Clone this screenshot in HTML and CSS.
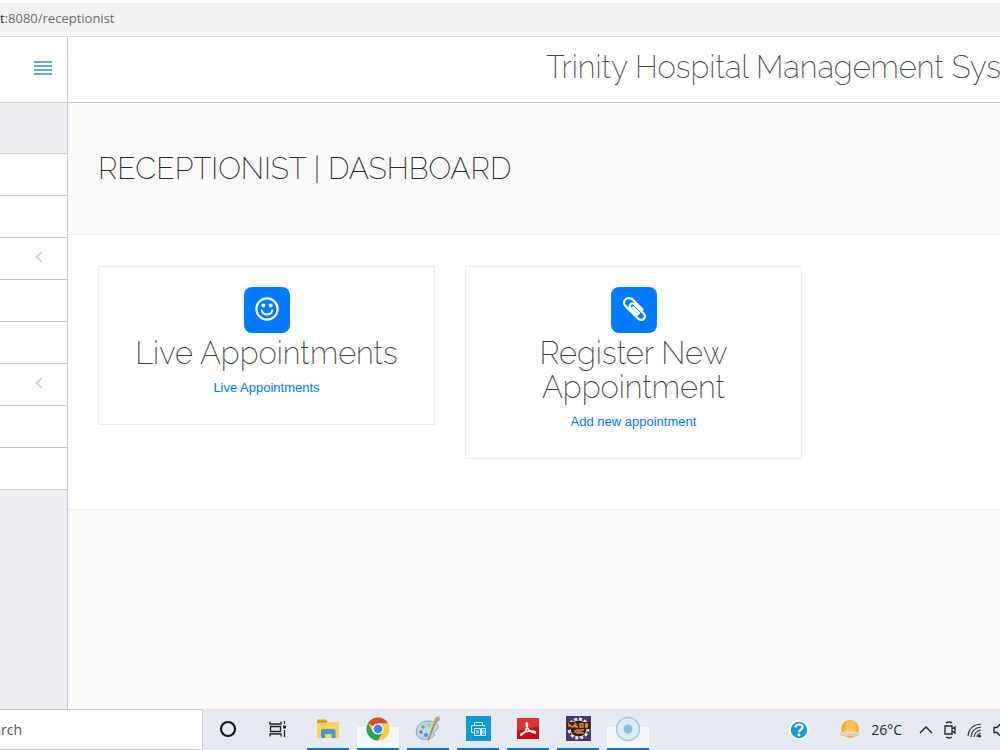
FILE: index.html
```html
<!DOCTYPE html>
<html lang="en">
<head>
<meta charset="utf-8">
<meta name="viewport" content="width=device-width, initial-scale=1.0">
<title>Receptionist | Dashboard</title>
<link rel="stylesheet" href="styles.css">
</head>
<body>

<!-- Address bar -->
<div class="address-bar">
  <div class="url"><b>t</b>:8080/receptionist</div>
</div>

<div class="app">
  <!-- Sidebar -->
  <aside class="sidebar">
    <div class="sidebar-head">
      <button class="menu-toggle" aria-label="Toggle menu"><span></span><span></span><span></span><span></span></button>
    </div>
    <nav class="menu">
      <a href="#"></a>
      <a href="#"></a>
      <a href="#"><svg width="8" height="12" viewBox="0 0 8 12"><path d="M7 1L1.500 6L7 11"/></svg></a>
      <a href="#"></a>
      <a href="#"></a>
      <a href="#"><svg width="8" height="12" viewBox="0 0 8 12"><path d="M7 1L1.500 6L7 11"/></svg></a>
      <a href="#"></a>
      <a href="#"></a>
    </nav>
  </aside>

  <div class="content">
    <header class="navbar">
      <h2>Trinity Hospital Management System</h2>
    </header>
    <section class="page-title">
      <h1>RECEPTIONIST | DASHBOARD</h1>
    </section>
    <main class="cards">
      <div class="card">
        <span class="card-icon">
          <svg width="24" height="24" viewBox="0 0 24 24">
            <circle cx="12" cy="12" r="10.600" fill="none" stroke="#fff" stroke-width="2.200"/>
            <circle cx="8.300" cy="8.500" r="2" fill="#fff"/>
            <circle cx="15.700" cy="8.500" r="2" fill="#fff"/>
            <path d="M6.800 13.500C8 18.800 16 18.800 17.200 13.500" fill="none" stroke="#fff" stroke-width="2" stroke-linecap="round"/>
          </svg>
        </span>
        <h2>Live Appointments</h2>
        <a href="#">Live Appointments</a>
      </div>
      <div class="card">
        <span class="card-icon">
          <svg width="24" height="24" viewBox="0 0 24 24" fill="none" stroke="#fff" stroke-width="2.200" stroke-linecap="round" stroke-linejoin="round">
            <path d="M20.500 12.500L11.500 3.200C8.500 0.200 4.200 0.600 2.600 3.400C1.500 5.500 2 7.600 3.800 9.400L15.800 21.200C18 23.400 20.600 23.400 22 21.800C23.400 20.200 23 17.800 21.400 16.200L12.800 7.600C11.200 6 9.400 6.200 8.400 7.200C7.400 8.400 7.600 10 8.800 11.200L15.500 17.800"/>
            <path d="M11.200 10.200L17.200 16.200"/>
          </svg>
        </span>
        <h2>Register New Appointment</h2>
        <a href="#">Add new appointment</a>
      </div>
    </main>
  </div>
</div>

<!-- Taskbar -->
<footer class="taskbar">
  <div class="search"><span>arch</span></div>
  <div class="apps">
    <button class="task" aria-label="Cortana">
      <svg width="18" height="18" viewBox="0 0 18 18"><circle cx="9" cy="9" r="7" fill="none" stroke="#17181c" stroke-width="2.200"/></svg>
    </button>
    <button class="task" aria-label="Task view">
      <svg width="18" height="18" viewBox="0 0 18 18" fill="none" stroke="#22242a" stroke-width="1.300"><path d="M1 1.500V4H12V1.500M1 16.500V14H12V16.500M1.500 6.500H11.500V11.500H1.500ZM15.500 1V4M15.500 10V17"/><path d="M14 5.500H17V8.500H14Z" fill="#22242a" stroke="none"/></svg>
    </button>
    <button class="task open" aria-label="File Explorer">
      <svg width="24" height="24" viewBox="0 0 24 24"><path d="M1 3H10L12 5H23V21H1Z" fill="#fdd160"/><path d="M1 3.500Q1 2.500 2 2.500H10L11.500 4.500L10 6H1Z" fill="#dda01e"/><path d="M5 21V13.500Q5 12 6.500 12H18Q19.500 12 19.500 13.500V21H15.500V17H9V21Z" fill="#439ad0"/></svg>
    </button>
    <button class="task open active" aria-label="Chrome">
      <svg width="24" height="24" viewBox="0 0 24 24"><circle cx="12" cy="12" r="11.500" fill="#fdce44"/><path d="M12 12L2 6.300A11.500 11.500 0 0 1 22 6.300H12Z" fill="#d94b3d"/><path d="M2 6.300A11.500 11.500 0 0 0 12 23.500L17 14.800L7 15Z" fill="#2f9e56"/><circle cx="12" cy="12" r="5.600" fill="#fff"/><circle cx="12" cy="12" r="4.400" fill="#4285f0"/></svg>
    </button>
    <button class="task open" aria-label="Paint">
      <svg width="26" height="26" viewBox="0 0 26 26"><path d="M13 5C5 5 0 12 1.500 18C3 24 12 25 18 21C21 19 17 17 20 15C23 13 24 11 22 8C20 6 17 5 13 5Z" fill="#b3dbee" stroke="#79aac6"/><circle cx="6" cy="16" r="1.800" fill="#e05a4e"/><circle cx="8" cy="11" r="1.800" fill="#65b560"/><circle cx="14" cy="9" r="1.800" fill="#f1b534"/><circle cx="11" cy="19" r="2" fill="#4c8fd7"/><path d="M21 7L14 24L12.500 25L13 22L19 6Z" fill="#c48749"/><path d="M19 6L20 2L24 0L25 4L21 7.500Z" fill="#c79a71"/></svg>
    </button>
    <button class="task open" aria-label="Printer">
      <svg width="25" height="25" viewBox="0 0 25 25"><path d="M0 0H25V25H0Z" fill="#0b98d5"/><g fill="none" stroke="#d4effb"><path d="M8.500 9.500V6.500H16.500V9.500M8 16.500H5.500V9.500H18.500V11M8.500 12.500H14.500V19.500H8.500ZM10 15H13M10 17H13M15.500 12.500H19.500V19.500H15.500ZM16 15H19M16 17H19"/></g></svg>
    </button>
    <button class="task open" aria-label="Acrobat">
      <svg width="24" height="24" viewBox="0 0 24 24"><path d="M1 1H23V22H1Z" fill="#c40e10"/><path d="M1 1H23V9L1 14Z" fill="#d93530"/><path d="M5 18C9 16 12 11 11.500 7C11 4.500 9.500 6 10.500 9C12 13 15 15.500 19 16C20.500 15.500 19 14 16 14C12 14 8 15 5 17Z" fill="none" stroke="#fff" stroke-width="1.500"/></svg>
    </button>
    <button class="task open" aria-label="DOS IDE">
      <svg width="25" height="25" viewBox="0 0 25 25"><path d="M0 0H25V25H0Z" fill="#49366d"/><circle cx="12.500" cy="12.500" r="9.500" fill="#211b20" stroke="#e7e4e6" stroke-width="3" stroke-dasharray="3 2"/><circle cx="12.500" cy="12.500" r="8.500" fill="#211b20" stroke="#ddd"/><path d="M1 6H24V13H1ZM7 13H18V19H7Z" fill="#39200f"/><path d="M3 11V8L6 11H7L9 8V11M10 8V11H12M14 8H17V11H14ZM19 8H22M19 9.500H22M19 11H22M9 14V17M11 14H13V17H11ZM18 14H15V17H18" fill="none" stroke="#df8430" stroke-width="1.500"/></svg>
    </button>
    <button class="task open active" aria-label="Recorder">
      <svg width="26" height="26" viewBox="0 0 26 26"><circle cx="13" cy="13" r="11.500" fill="#dcebf5" stroke="#a2cbe2" stroke-width="1.500"/><circle cx="13" cy="13" r="4.500" fill="#8bc0df"/></svg>
    </button>
  </div>
  <div class="tray">
    <svg width="20" height="20" viewBox="0 0 20 20"><circle cx="10" cy="10" r="9" fill="#179ad7" stroke="#fff" stroke-width="1.500"/><path d="M6.500 7.500C6.500 3.500 13.500 3.500 13.500 7.300C13.500 10 10 9.500 10 12.300" fill="none" stroke="#fff" stroke-width="2.200"/><circle cx="10" cy="15" r="1.400" fill="#fff"/></svg>
    <div class="weather">
      <svg width="22" height="22" viewBox="0 0 22 22"><circle cx="11" cy="10" r="9" fill="#f8b02e"/><circle cx="12" cy="7" r="5" fill="#fbc34d"/><path d="M3 17C0 17 0 13 4 13C5 10 10 9 12 12C14 10 17 11 17 13C21 12 22 16 19 17Z" fill="#e3cbb0"/><path d="M3 15Q10 12 20 15" fill="none" stroke="#f5e8d7"/></svg>
      <span>26°C</span>
    </div>
    <div class="status">
      <svg width="14" height="18" viewBox="0 0 14 18" fill="none" stroke="#22242a" stroke-width="1.400"><path d="M1 12L7 6L13 12"/></svg>
      <svg width="14" height="18" viewBox="0 0 14 18" fill="none" stroke="#22242a" stroke-width="1.300"><path d="M2 5H9V13H2ZM9 8L12 6V12L9 10M3 2Q6 0 9 2M3 16Q6 18 9 16"/></svg>
      <svg width="16" height="18" viewBox="0 0 16 18" fill="none" stroke="#3a3c42" stroke-width="1.200"><path d="M1 15Q2 4 14 3M4 16Q5 7 14 6M7 16Q8 10 14 9M10 16Q10 13 14 12"/><circle cx="12.500" cy="15" r="1.500" fill="#22242a" stroke="none"/></svg>
      <svg width="9" height="18" viewBox="0 0 9 18" fill="none" stroke="#22242a" stroke-width="1.300"><path d="M1 6.500H4L8 2.500V15.500L4 11.500H1Z"/></svg>
    </div>
  </div>
</footer>

</body>
</html>
```
FILE: styles.css
```css
* {
  box-sizing: border-box;
}

body {
  margin: 0;
  height: 100vh;
  display: flex;
  flex-direction: column;
  overflow: hidden;
  background-color: #ffffff;
  font-family: Arial, "Liberation Sans", sans-serif;
}

h1, h2 {
  margin: 0;
  font-family: Raleway, Lato, sans-serif;
  font-weight: 200;
}

a {
  color: #007aff;
  text-decoration: none;
}

button {
  border: none;
  background: none;
  padding: 0;
}

svg {
  display: block;
  flex: none;
}

/* Address bar */
.address-bar {
  padding: 3px 0 4px;
  border-bottom: 1px solid #dcdddf;
}

.url {
  display: flex;
  height: 29px;
  align-items: center;
  background-color: #eff1f2;
  color: #6c7074;
  font-family: "Segoe UI", "Open Sans", sans-serif;
  font-size: 13px;
}

.url b {
  color: #303236;
  font-weight: 400;
}

.app {
  flex: 1;
  display: flex;
  min-height: 0;
}

/* Sidebar */
.sidebar {
  flex: none;
  width: 68px;
  border-right: 1px solid #c8c7cc;
  background-color: #efeef4;
}

.sidebar-head {
  display: flex;
  align-items: center;
  justify-content: flex-end;
  height: 66px;
  padding: 0 15px 4px 0;
  border-bottom: 1px solid #c8c7cc;
  background-color: #ffffff;
}

.menu-toggle {
  display: grid;
  gap: 2px;
  width: 18px;
}

.menu-toggle span {
  height: 2px;
  background-color: #67a6df;
}

.menu {
  margin-top: 50px;
  border-top: 1px solid #c8c7cc;
}

.menu a {
  display: flex;
  align-items: center;
  justify-content: flex-end;
  height: 42px;
  padding: 0 24px 4px 0;
  border-bottom: 1px solid #c8c7cc;
  background-color: #ffffff;
}

.menu path {
  fill: none;
  stroke: #c4c4c8;
  stroke-width: 1.5;
}

/* Page content */
.content {
  flex: 1;
  min-width: 0;
  background-color: #fafafa;
}

.navbar {
  display: flex;
  align-items: center;
  height: 66px;
  padding: 0 0 6px 478px;
  overflow: hidden;
  border-bottom: 1px solid #c8c7cc;
  background-color: #ffffff;
}

.navbar h2 {
  color: #4a4a4e;
  font-size: 31px;
  white-space: nowrap;
}

.page-title {
  display: flex;
  align-items: center;
  height: 132px;
  padding: 0 30px;
  border-bottom: 1px solid #eeeeee;
}

.page-title h1 {
  color: #2c2c2c;
  font-size: 30px;
}

.cards {
  display: grid;
  grid-template-columns: repeat(2, minmax(0, 337px));
  gap: 30px;
  align-items: start;
  padding: 31px 30px 50px;
  border-bottom: 1px solid #eeeeee;
  background-color: #ffffff;
}

.card {
  display: flex;
  flex-direction: column;
  align-items: center;
  padding: 20px 60px 27px;
  border: 1px solid #ebebeb;
  text-align: center;
}

.card:first-child {
  padding-left: 20px;
  padding-right: 20px;
}

.card-icon {
  display: grid;
  place-items: center;
  width: 46px;
  height: 46px;
  padding-bottom: 2px;
  border-radius: 8px;
  background-color: #007aff;
}

.card h2 {
  margin: 3px 0 9px;
  color: #3f3f3f;
  font-size: 31px;
  line-height: 34px;
}

.card a {
  font-size: 13px;
  line-height: 18px;
}

/* Taskbar */
.taskbar {
  flex: none;
  display: flex;
  height: 41px;
  background-color: #e5eaf2;
  color: #2a2c30;
  font-family: "Segoe UI", "Open Sans", sans-serif;
  font-size: 14px;
}

.search {
  display: flex;
  align-items: center;
  width: 203px;
  border: 1px solid #c9cbce;
  border-left: none;
  background-color: #ffffff;
  color: #55575b;
}

.search span {
  display: flex;
  justify-content: flex-end;
  width: 22px;
}

.apps {
  display: flex;
  gap: 8px;
  margin-left: 4px;
}

.task {
  display: grid;
  place-items: center;
  width: 42px;
  border-bottom: 2px solid transparent;
}

.task.open {
  border-bottom-color: #0b78d0;
}

.task.active {
  background: linear-gradient(transparent 45%, #f4f7fb 45%) border-box;
  border-bottom-color: #0b78d0;
}

.tray {
  display: flex;
  align-items: center;
  gap: 30px;
  margin: 0 -2px 0 auto;
}

.weather {
  display: flex;
  align-items: center;
  gap: 10px;
}

.status {
  display: flex;
  align-items: center;
  gap: 10px;
  margin-left: -13px;
}
```
